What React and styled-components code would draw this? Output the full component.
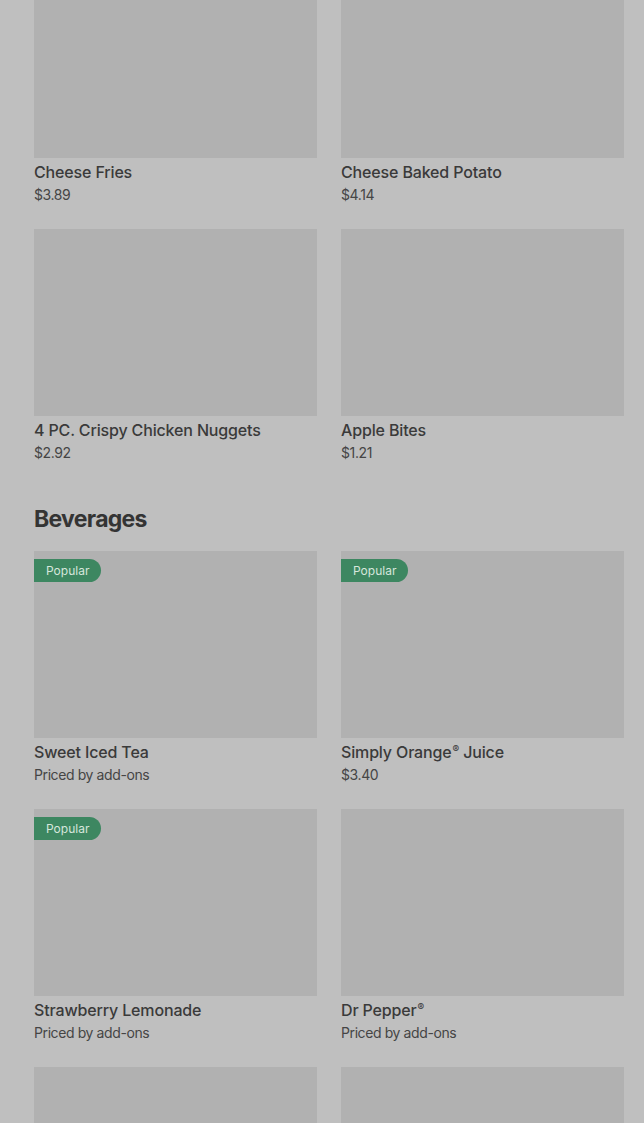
import React from "react";
import styled, { createGlobalStyle } from "styled-components";

const Global = createGlobalStyle`
  html, body { margin: 0; padding: 0; background: #bfbfbf; overflow: hidden; }
  body { font-family: Inter, Roboto, "Noto Sans", Arial, sans-serif; color: #3b3b3b; }
`;

const Page = styled.div`
  padding: 0 20px 0 34px;
  margin-top: -29px;
`;

const Section = styled.section`
  & + & { margin-top: 40px; }
`;

const SectionTitle = styled.h2`
  margin: 0 0 16px;
  font-size: 23px;
  line-height: 32px;
  font-weight: 700;
  letter-spacing: -0.7px;
  color: #343434;
`;

const Grid = styled.div`
  display: grid;
  grid-template-columns: 283px 283px;
  column-gap: 24px;
  row-gap: 24px;
`;

const Card = styled.div`
  display: flex;
  flex-direction: column;
`;

const Thumb = styled.div`
  position: relative;
  height: 187px;
  background: #b1b1b1;
`;

const Badge = styled.span`
  position: absolute;
  top: 8px;
  left: 0;
  height: 23px;
  padding: 0 12px;
  display: flex;
  align-items: center;
  background: #3d8761;
  color: #d6e6dc;
  font-size: 12px;
  border-radius: 0 12px 12px 0;
`;

const Name = styled.div`
  margin-top: 2px;
  font-size: 16px;
  line-height: 24px;
  font-weight: 500;
  letter-spacing: -0.15px;
  color: #3a3a3a;
`;

const Reg = styled.sup`
  font-size: 10px;
  line-height: 0;
  vertical-align: 5px;
  margin-left: 1px;
`;

const Price = styled.div`
  margin-top: 1px;
  font-size: 14px;
  line-height: 20px;
  color: #454545;
  letter-spacing: -0.4px;
`;

const sections = [
  {
    title: null,
    items: [
      { name: "Cheese Fries", price: "$3.89" },
      { name: "Cheese Baked Potato", price: "$4.14" },
      { name: "4 PC. Crispy Chicken Nuggets", price: "$2.92" },
      { name: "Apple Bites", price: "$1.21" },
    ],
  },
  {
    title: "Beverages",
    items: [
      { name: "Sweet Iced Tea", price: "Priced by add-ons", popular: true },
      { name: "Simply Orange® Juice", price: "$3.40", popular: true },
      { name: "Strawberry Lemonade", price: "Priced by add-ons", popular: true },
      { name: "Dr Pepper®", price: "Priced by add-ons" },
      { name: "Coca-Cola®", price: "Priced by add-ons" },
      { name: "Diet Coke®", price: "Priced by add-ons" },
    ],
  },
];

function renderName(name) {
  const parts = name.split("®");
  return parts.map((p, i) => (
    <React.Fragment key={i}>
      {p}
      {i < parts.length - 1 && <Reg>®</Reg>}
    </React.Fragment>
  ));
}

export default function App() {
  return (
    <>
      <Global />
      <Page>
        {sections.map((s, i) => (
          <Section key={i}>
            {s.title && <SectionTitle>{s.title}</SectionTitle>}
            <Grid>
              {s.items.map((it) => (
                <Card key={it.name}>
                  <Thumb>{it.popular && <Badge>Popular</Badge>}</Thumb>
                  <Name>{renderName(it.name)}</Name>
                  <Price>{it.price}</Price>
                </Card>
              ))}
            </Grid>
          </Section>
        ))}
      </Page>
    </>
  );
}
